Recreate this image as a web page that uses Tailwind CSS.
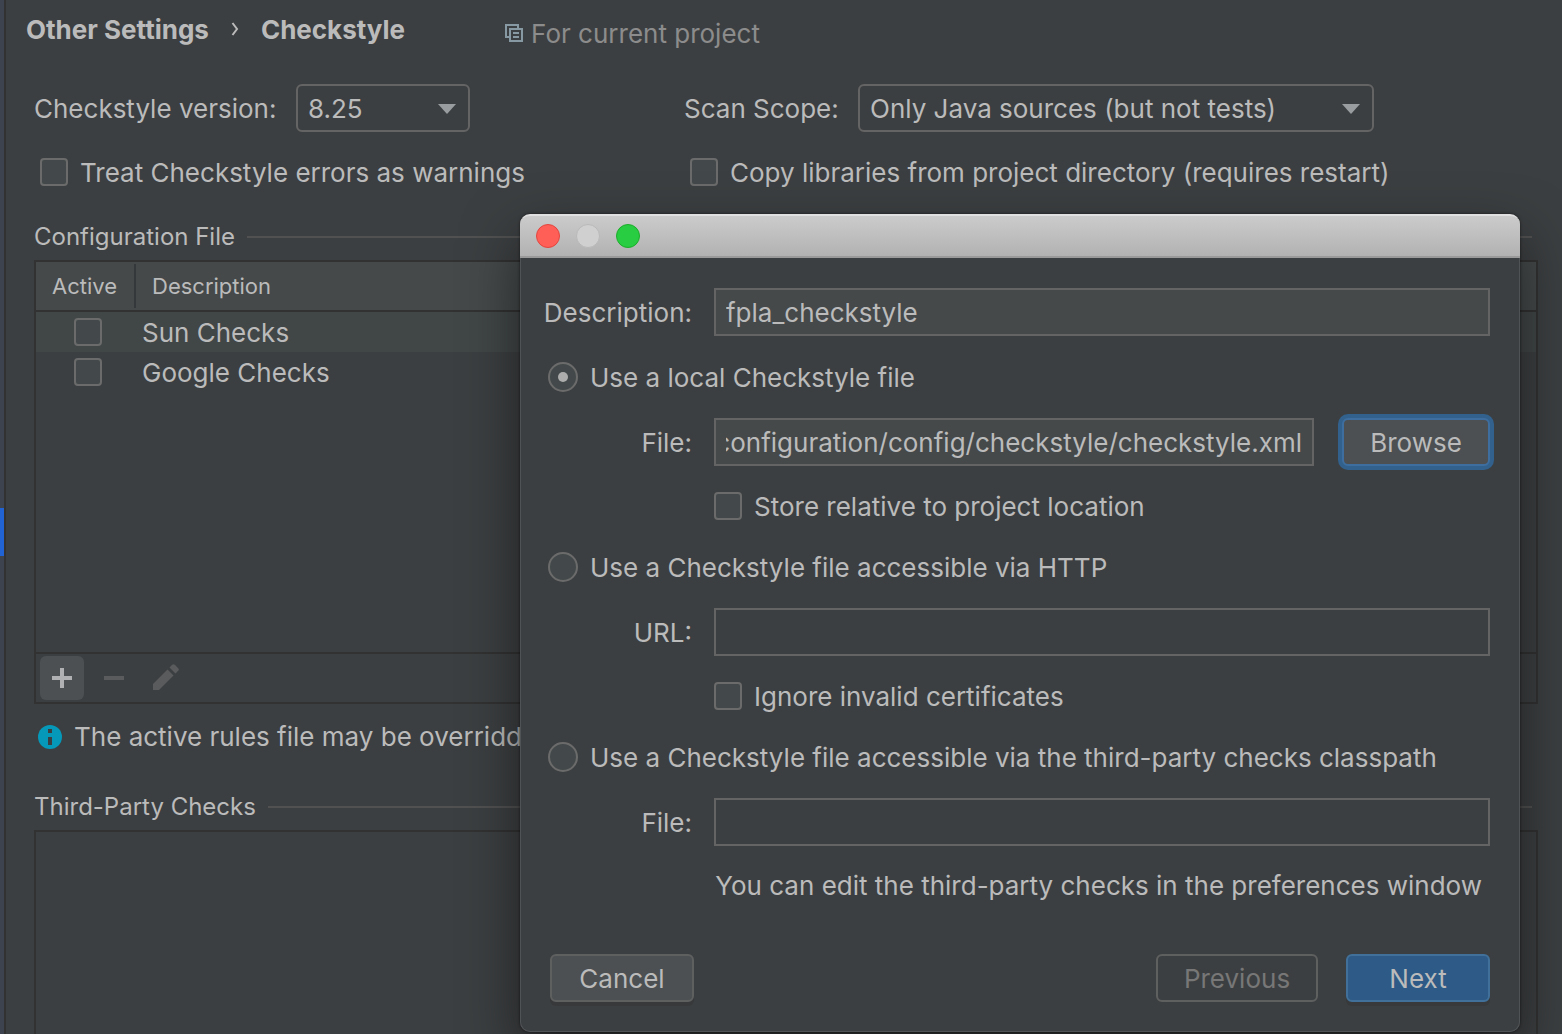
<!DOCTYPE html>
<html lang="en">
<head>
<meta charset="utf-8">
<meta name="viewport" content="width=device-width, initial-scale=1">
<title>Checkstyle settings</title>
<script src="https://cdn.jsdelivr.net/npm/@tailwindcss/browser@4"></script>
</head>
<body class="relative flex h-screen overflow-hidden bg-[#3c3f41] font-['Inter','Roboto',sans-serif] text-[26px] leading-[31px] text-[#bbbbbb]">

  <!-- Edge of the settings tree with its selected row -->
  <aside class="w-1.5 shrink-0 border-r-2 border-[#323232] bg-[#3d4450] pt-[508px]">
    <div class="h-12 bg-[#2163d5]"></div>
  </aside>

  <main class="flex min-w-0 flex-1 flex-col pr-6 pl-7">
    <header class="-ml-2 flex h-[58px] shrink-0 items-center">
      <h1 class="flex items-center font-bold">
        <a href="#">Other Settings</a>
        <svg class="mx-[22px] h-3.5 w-2" viewBox="0 0 8 14" fill="none" stroke="#bbbbbb" stroke-width="2"><path d="M1.5 1 L6 7 L1.5 13"/></svg>
        <span>Checkstyle</span>
      </h1>
      <p class="mt-2 ml-[100px] flex items-center gap-2 text-[#8c8c8c]">
        <svg class="h-[18px] w-[18px]" viewBox="0 0 18 18" fill="none" stroke="#8799a3" stroke-width="2"><path d="M4 13 H1 V1 H13 V4"/><path d="M5 5 H17 V17 H5 Z"/><path d="M8 9 H14 M8 13 H14"/></svg>
        For current project
      </p>
    </header>

    <div class="mt-[26px] grid shrink-0 grid-cols-[650px_1fr] gap-y-[26px]">
      <div class="flex items-center">
        <label for="version" class="w-[262px]">Checkstyle version:</label>
        <div class="relative w-[174px]">
          <select id="version" class="h-12 w-full appearance-none rounded-md border-2 border-[#646464] bg-[#3c3f41] pl-2.5 outline-none"><option>8.25</option></select>
          <svg class="pointer-events-none absolute top-5 right-3.5 h-2.5 w-[18px]" viewBox="0 0 18 10" fill="#9a9da0"><path d="M0 0 H18 L9 10 Z"/></svg>
        </div>
      </div>
      <div class="flex items-center">
        <label for="scope" class="w-[174px]">Scan Scope:</label>
        <div class="relative w-[516px]">
          <select id="scope" class="h-12 w-full appearance-none rounded-md border-2 border-[#646464] bg-[#3c3f41] pl-2.5 outline-none"><option>Only Java sources (but not tests)</option></select>
          <svg class="pointer-events-none absolute top-5 right-3.5 h-2.5 w-[18px]" viewBox="0 0 18 10" fill="#9a9da0"><path d="M0 0 H18 L9 10 Z"/></svg>
        </div>
      </div>
      <label class="flex h-7 items-center gap-3 pl-1.5 whitespace-nowrap">
        <input type="checkbox" class="h-7 w-7 appearance-none rounded border-2 border-[#6b6b6b] bg-[#43494a]">
        Treat Checkstyle errors as warnings
      </label>
      <label class="flex h-7 items-center gap-3 pl-1.5 whitespace-nowrap">
        <input type="checkbox" class="h-7 w-7 appearance-none rounded border-2 border-[#6b6b6b] bg-[#43494a]">
        Copy libraries from project directory (requires restart)
      </label>
    </div>

    <section class="mt-9 shrink-0">
      <h2 class="flex items-center gap-3 pr-1.5 text-2xl leading-[30px]">Configuration File<span class="h-0.5 flex-1 bg-[#515151]"></span></h2>
      <div class="mt-2 border-2 border-[#323232]">
        <div class="h-[390px]">
          <table class="w-full table-fixed border-separate border-spacing-0 text-left">
            <thead>
              <tr class="bg-[#45494a] text-[22px]">
                <th class="h-[50px] w-[106px] border-b-2 border-[#323232] p-0 font-normal"><div class="flex h-11 w-[100px] items-center border-r-2 border-[#35383a] pl-4">Active</div></th>
                <th class="h-[50px] border-b-2 border-[#323232] p-0 pl-2.5 font-normal">Description</th>
              </tr>
            </thead>
            <tbody>
              <tr class="h-10 bg-[#414647]">
                <td class="p-0 pl-[38px]"><input type="checkbox" aria-label="Sun Checks active" class="block h-7 w-7 appearance-none rounded border-2 border-[#6b6b6b] bg-[#43494a]"></td>
                <td class="p-0">Sun Checks</td>
              </tr>
              <tr class="h-10">
                <td class="p-0 pl-[38px]"><input type="checkbox" aria-label="Google Checks active" class="block h-7 w-7 appearance-none rounded border-2 border-[#6b6b6b] bg-[#43494a]"></td>
                <td class="p-0">Google Checks</td>
              </tr>
            </tbody>
          </table>
        </div>
        <div class="flex h-[50px] items-center gap-2 border-t-2 border-[#323232] pl-1">
          <button aria-label="Add" class="flex h-11 w-11 items-center justify-center rounded-md bg-[#4c5052]"><svg class="h-5 w-5" viewBox="0 0 20 20" fill="#afb1b3"><path d="M8 0 H12 V8 H20 V12 H12 V20 H8 V12 H0 V8 H8 Z"/></svg></button>
          <button aria-label="Remove" disabled class="flex h-11 w-11 items-center justify-center"><svg class="h-1 w-5" viewBox="0 0 20 4" fill="#595b5c"><path d="M0 0 H20 V4 H0 Z"/></svg></button>
          <button aria-label="Edit" disabled class="flex h-11 w-11 items-center justify-center"><svg class="h-7 w-7" viewBox="0 0 28 28" fill="#595b5c"><path d="M1 26 V20 L15.5 5.5 L21.5 11.5 L7 26 Z"/><path d="M17.5 3.5 L20.2 0.8 Q21.5 -0.5 22.8 0.8 L26.2 4.2 Q27.5 5.5 26.2 6.8 L23.5 9.5 Z"/></svg></button>
        </div>
      </div>
      <p class="mt-[17px] flex items-center gap-3 pl-1 whitespace-nowrap">
        <svg class="h-6 w-6 shrink-0" viewBox="0 0 24 24"><circle cx="12" cy="12" r="12" fill="#0598b8"/><path fill="#3c3f41" d="M10 4 H14 V8 H10 Z M10 12 H14 V20 H10 Z"/></svg>
        The active rules file may be overridden
      </p>
    </section>

    <section class="mt-10 flex flex-1 flex-col">
      <h2 class="flex items-center gap-3 pr-1.5 text-2xl leading-[30px]">Third-Party Checks<span class="h-0.5 flex-1 bg-[#515151]"></span></h2>
      <div class="mt-2 flex-1 border-2 border-b-0 border-[#323232]"></div>
    </section>
  </main>

  <!-- Dialog window -->
  <div role="dialog" aria-label="Add configuration file" class="absolute top-[214px] right-[42px] left-[520px] rounded-[10px] bg-[#3c3f41] shadow-[0_0_3px_rgba(0,0,0,0.6),0_24px_56px_rgba(0,0,0,0.5)]">
    <div class="flex h-11 items-center gap-4 rounded-t-[10px] border-t-2 border-b-2 border-t-[#e0e0e0] border-b-[#9a9a9a] bg-linear-to-b from-[#cbcbcb] to-[#b2b2b2] px-4">
      <button aria-label="Close" class="h-6 w-6 rounded-full border border-[#e2463f] bg-[#ff5f57]"></button>
      <button aria-label="Minimize" class="h-6 w-6 rounded-full border border-[#b9b9b9] bg-[#d0d0d0]"></button>
      <button aria-label="Zoom" class="h-6 w-6 rounded-full border border-[#1dad2b] bg-[#28cd41]"></button>
    </div>
    <form class="rounded-b-[10px] border border-t-0 border-[#505355] px-[29px] pt-[30px] pb-[29px]">
      <div class="flex items-center">
        <label for="description" class="-ml-2 w-[150px] text-right whitespace-nowrap">Description:</label>
        <input id="description" type="text" value="fpla_checkstyle" class="ml-[22px] h-12 min-w-0 flex-1 border-2 border-[#646464] bg-[#45494a] px-2.5 outline-none">
      </div>

      <label class="mt-[26px] -ml-0.5 flex h-[30px] items-center gap-3 whitespace-nowrap">
        <input type="radio" name="source" checked class="grid h-[30px] w-[30px] appearance-none place-items-center rounded-full border-2 border-[#6b6b6b] bg-[#43494a] before:h-2.5 before:w-2.5 before:rounded-full before:bg-[#adadad]">
        Use a local Checkstyle file
      </label>
      <div class="mt-[26px] flex items-center">
        <label for="localfile" class="-ml-2 w-[150px] text-right">File:</label>
        <input id="localfile" type="text" value="/configuration/config/checkstyle/checkstyle.xml" class="ml-[22px] h-12 min-w-0 flex-1 border-2 border-[#646464] bg-[#45494a] px-2.5 outline-none">
        <button type="button" class="ml-7 h-12 w-[148px] rounded-md border-2 border-[#3d6e9f] bg-[#4c5052] ring-4 ring-[#31618c]">Browse</button>
      </div>
      <label class="mt-[26px] ml-[164px] flex h-7 items-center gap-3 whitespace-nowrap">
        <input type="checkbox" class="h-7 w-7 appearance-none rounded border-2 border-[#6b6b6b] bg-[#43494a]">
        Store relative to project location
      </label>

      <label class="mt-8 -ml-0.5 flex h-[30px] items-center gap-3 whitespace-nowrap">
        <input type="radio" name="source" class="h-[30px] w-[30px] appearance-none rounded-full border-2 border-[#6b6b6b] bg-[#43494a]">
        Use a Checkstyle file accessible via HTTP
      </label>
      <div class="mt-[26px] flex items-center">
        <label for="url" class="-ml-2 w-[150px] text-right">URL:</label>
        <input id="url" type="text" class="ml-[22px] h-12 min-w-0 flex-1 border-2 border-[#646464] bg-[#3c3f41] px-2.5 outline-none">
      </div>
      <label class="mt-[26px] ml-[164px] flex h-7 items-center gap-3 whitespace-nowrap">
        <input type="checkbox" class="h-7 w-7 appearance-none rounded border-2 border-[#6b6b6b] bg-[#43494a]">
        Ignore invalid certificates
      </label>

      <label class="mt-8 -ml-0.5 flex h-[30px] items-center gap-3 whitespace-nowrap">
        <input type="radio" name="source" class="h-[30px] w-[30px] appearance-none rounded-full border-2 border-[#6b6b6b] bg-[#43494a]">
        Use a Checkstyle file accessible via the third-party checks classpath
      </label>
      <div class="mt-[26px] flex items-center">
        <label for="classpathfile" class="-ml-2 w-[150px] text-right">File:</label>
        <input id="classpathfile" type="text" class="ml-[22px] h-12 min-w-0 flex-1 border-2 border-[#646464] bg-[#3c3f41] px-2.5 outline-none">
      </div>
      <p class="mt-6 pr-2 text-right whitespace-nowrap">You can edit the third-party checks in the preferences window</p>

      <div class="mt-[53px] flex">
        <button type="button" class="h-12 w-36 rounded-md border-2 border-[#5e6060] bg-[#4c5052] shadow-[0_4px_0_#37393a]">Cancel</button>
        <button type="button" disabled class="ml-auto h-12 w-[162px] rounded-md border-2 border-[#5e6060] text-[#777777]">Previous</button>
        <button type="submit" class="ml-7 h-12 w-36 rounded-md border-2 border-[#41719a] bg-[#2d5a86] shadow-[0_4px_0_#37393a]">Next</button>
      </div>
    </form>
  </div>

  <script>
    // Keep the file name at the end of the path in view.
    const path = document.getElementById('localfile');
    path.scrollLeft = path.scrollWidth;
  </script>
</body>
</html>
